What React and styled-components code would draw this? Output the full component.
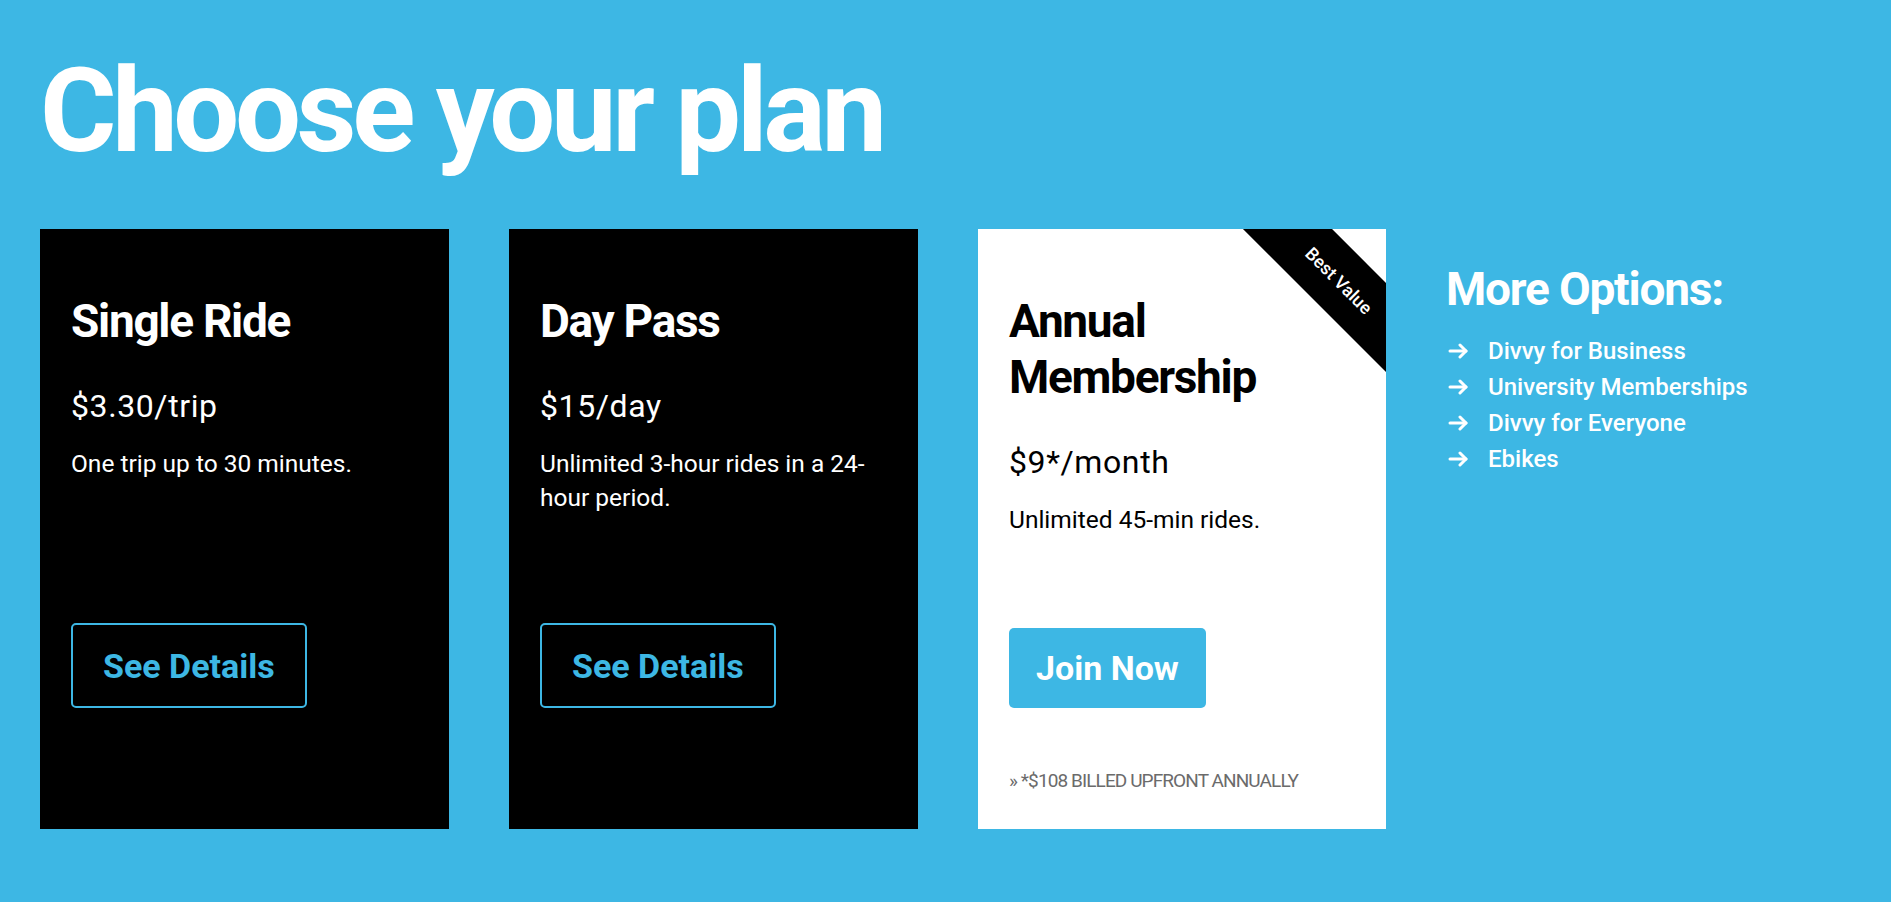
import React from "react";
import styled, { createGlobalStyle } from "styled-components";

const BLUE = "#3db7e4";

const Global = createGlobalStyle`
  html, body { margin: 0; padding: 0; background: ${BLUE}; }
  body { font-family: Roboto, "Liberation Sans", sans-serif; }
  * { box-sizing: border-box; }
`;

const Page = styled.main`
  min-height: 902px;
  background: ${BLUE};
  padding: 0 40px;
`;

const Title = styled.h1`
  margin: 0;
  padding-top: 41px;
  font-family: Roboto, sans-serif;
  font-weight: 700;
  font-size: 117px;
  line-height: 140px;
  color: #fff;
  letter-spacing: -4.4px;
`;

const Row = styled.section`
  display: flex;
  gap: 60px;
  margin-top: 48px;
  align-items: flex-start;
`;

const Card = styled.article`
  position: relative;
  overflow: hidden;
  width: ${(p) => p.$w}px;
  height: 600px;
  display: flex;
  flex-direction: column;
  padding: 64px 30px 0 31px;
  background: ${(p) => (p.$light ? "#fff" : "#000")};
  color: ${(p) => (p.$light ? "#000" : "#fff")};
`;

const CardTitle = styled.h2`
  margin: 0;
  font-weight: 700;
  font-size: 46px;
  line-height: 56px;
  letter-spacing: -1.3px;
`;

const Price = styled.div`
  margin-top: 38px;
  font-size: 32px;
  line-height: 38px;
  letter-spacing: 0.6px;
`;

const Desc = styled.p`
  margin: 22px 0 0;
  font-size: 24.5px;
  line-height: 34px;
`;

const Actions = styled.div`
  margin-top: auto;
  display: flex;
  flex-direction: column;
`;

const ButtonRow = styled.div`
  height: 85px;
  display: flex;
  align-items: flex-end;
`;

const OutlineButton = styled.a`
  display: inline-flex;
  align-items: center;
  height: 85px;
  padding: 0 30px;
  border: 2px solid ${BLUE};
  border-radius: 5px;
  color: ${BLUE};
  font-weight: 700;
  font-size: 34px;
  text-decoration: none;
`;

const SolidButton = styled.a`
  display: inline-flex;
  align-items: center;
  height: 80px;
  padding: 0 27px;
  border-radius: 5px;
  background: ${BLUE};
  color: #fff;
  font-weight: 700;
  font-size: 34px;
  text-decoration: none;
`;

const NoteRow = styled.div`
  height: 121px;
  padding-top: 61px;
`;

const Note = styled.p`
  margin: 0;
  font-size: 19px;
  line-height: 24px;
  letter-spacing: -0.9px;
  color: #6b6b6b;
  text-transform: uppercase;
`;

const Ribbon = styled.div`
  position: absolute;
  left: 231px;
  top: 20px;
  width: 260px;
  height: 63px;
  background: #000;
  color: #fff;
  transform: rotate(45deg);
  display: flex;
  align-items: center;
  justify-content: center;
  font-size: 18px;
  font-weight: 500;
`;

const Side = styled.aside`
  padding-top: 32px;
  color: #fff;
`;

const SideTitle = styled.h3`
  margin: 0;
  font-weight: 700;
  font-size: 46px;
  line-height: 56px;
  letter-spacing: -1.2px;
`;

const Links = styled.ul`
  list-style: none;
  margin: 16px 0 0;
  padding: 0 0 0 2px;
`;

const LinkItem = styled.li`
  display: flex;
  align-items: center;
  gap: 19px;
  font-size: 24px;
  font-weight: 500;
  line-height: 36px;
`;

const Arrow = () => (
  <svg width="21" height="16" viewBox="0 0 21 16" fill="none" stroke="#fff" strokeWidth="3" strokeLinecap="round" strokeLinejoin="round">
    <path d="M2 8h16" />
    <path d="M12 2l6 6-6 6" />
  </svg>
);

const plans = [
  { title: "Single Ride", price: "$3.30/trip", desc: "One trip up to 30 minutes." },
  { title: "Day Pass", price: "$15/day", desc: "Unlimited 3-hour rides in a 24-hour period." },
];

export default function App() {
  return (
    <Page>
      <Global />
      <Title>Choose your plan</Title>
      <Row>
        {plans.map((p) => (
          <Card key={p.title} $w={409}>
            <CardTitle>{p.title}</CardTitle>
            <Price>{p.price}</Price>
            <Desc>{p.desc}</Desc>
            <Actions>
              <ButtonRow>
                <OutlineButton href="#">See Details</OutlineButton>
              </ButtonRow>
              <NoteRow />
            </Actions>
          </Card>
        ))}
        <Card $w={408} $light>
          <Ribbon>Best Value</Ribbon>
          <CardTitle>Annual Membership</CardTitle>
          <Price>$9*/month</Price>
          <Desc>Unlimited 45-min rides.</Desc>
          <Actions>
            <ButtonRow>
              <SolidButton href="#">Join Now</SolidButton>
            </ButtonRow>
            <NoteRow>
              <Note>» *$108 billed upfront annually</Note>
            </NoteRow>
          </Actions>
        </Card>
        <Side>
          <SideTitle>More Options:</SideTitle>
          <Links>
            {["Divvy for Business", "University Memberships", "Divvy for Everyone", "Ebikes"].map((t) => (
              <LinkItem key={t}>
                <Arrow />
                {t}
              </LinkItem>
            ))}
          </Links>
        </Side>
      </Row>
    </Page>
  );
}
